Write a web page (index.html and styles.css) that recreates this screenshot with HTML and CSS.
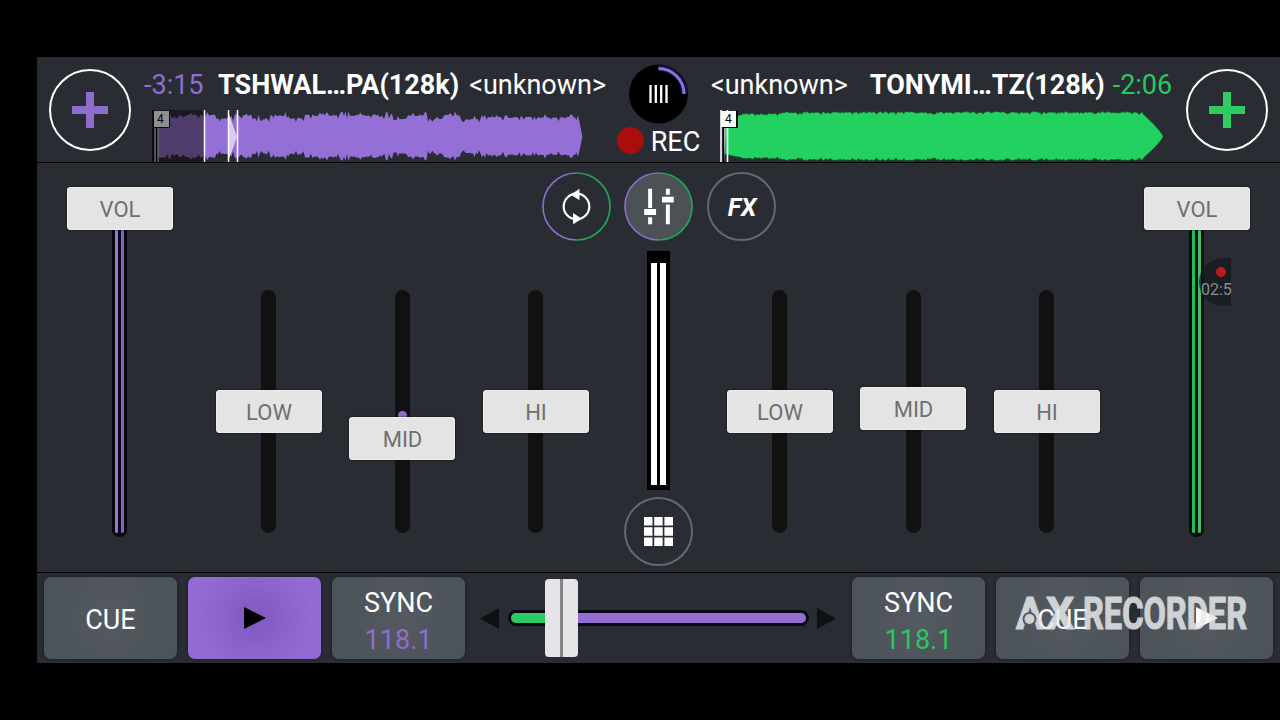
FILE: index.html
```html
<!DOCTYPE html>
<html lang="en">
<head>
  <meta charset="UTF-8">
  <meta name="viewport" content="width=device-width, initial-scale=1.0">
  <title>DJ Mixer</title>
  <link rel="stylesheet" href="styles.css">
</head>
<body>
  <div class="app">
    <header class="header">
      <button class="add purple" aria-label="Load track">
        <svg width="36" height="36" viewBox="0 0 36 36"><path d="M14 0h8v14h14v8H22v14h-8V22H0v-8h14z" fill="currentColor"/></svg>
      </button>

      <div class="deck">
        <div class="track-info">
          <span class="time purple">-3:15</span>
          <span class="title">TSHWAL…PA(128k)</span>
          <span class="artist">&lt;unknown&gt;</span>
        </div>
        <svg class="wave wave-left" width="432" height="52" viewBox="0 0 432 52">
          <rect width="52" height="52" fill="#1b1a20"/>
          <path id="waveLeft" fill="#946fd5"/>
          <rect x="6" width="46" height="52" fill="#1b1a20" opacity=".58"/>
          <path d="M1.500 0v52M4.500 17v35" stroke="#050507" stroke-width="2"/>
          <path d="M3 16v36" stroke="#929593"/>
          <path d="M6 18v34" stroke="#777a78"/>
          <path d="M77 4l8 23-8 22z" fill="#d9cbed"/>
          <path d="M52.500 0v52M76.500 0v52M85.500 0v52" stroke="#fff" stroke-width="1.500"/>
          <rect x="1" y="1" width="17" height="17" fill="#08090b"/>
          <rect x="2" y="1" width="15" height="16" fill="#8d908e"/>
          <text x="5" y="13" class="cue-no">4</text>
        </svg>
      </div>

      <div class="master">
        <svg width="60" height="60" viewBox="0 0 60 60">
          <circle cx="29.500" cy="30" r="29.500" fill="#000"/>
          <path d="M29.500 4a26 26 0 0 1 26 26" fill="none" stroke="#170a58" stroke-width="6"/>
          <path d="M29.500 4.500A25.500 25.500 0 0 1 55 30" fill="none" stroke="#8e76c8" stroke-width="3"/>
          <path d="M21.500 21v18M26.800 21v18M32.200 21v18M37.500 21v18" stroke="#fff" stroke-width="2.300"/>
        </svg>
        <div class="rec"><i class="rec-dot"></i>REC</div>
      </div>

      <div class="deck deck-right">
        <div class="track-info">
          <span class="artist">&lt;unknown&gt;</span>
          <span class="title">TONYMI…TZ(128k)</span>
          <span class="time green">-2:06</span>
        </div>
        <svg class="wave wave-right" width="445" height="52" viewBox="0 0 445 52">
          <path id="waveRight" fill="#23d160" stroke="#075f24" stroke-width=".7"/>
          <path d="M4 17h3l-2 35z" fill="#aab3ad"/>
          <path d="M2 0v52M8.500 0v52" stroke="#fff" stroke-width="1.600"/>
          <path d="M4.500 17v35" stroke="#050507"/>
          <rect x="3" y="1" width="16" height="17" fill="#08090b"/>
          <rect x="2" y="1" width="15" height="16" fill="#fff"/>
          <text x="6" y="13" class="cue-no">4</text>
        </svg>
      </div>

      <button class="add green" aria-label="Load track">
        <svg width="36" height="36" viewBox="0 0 36 36"><path d="M14 0h8v14h14v8H22v14h-8V22H0v-8h14z" fill="currentColor"/></svg>
      </button>
    </header>

    <main class="mixer">
      <div class="fader volume purple">
        <div class="handle">VOL</div>
        <div class="level"></div>
      </div>

      <div class="eq">
        <div class="fader"><div class="handle" style="margin-top: 100px">LOW</div></div>
        <div class="fader purple"><i class="mark"></i><div class="handle" style="margin-top: 126.5px">MID</div></div>
        <div class="fader"><div class="handle" style="margin-top: 100px">HI</div></div>
      </div>

      <div class="center">
        <div class="modes">
          <button class="round two-tone" aria-label="Loop">
            <svg width="69" height="69" viewBox="0 0 70 70">
              <path d="M35 1a34 34 0 0 0 0 68" fill="none" stroke="#8a6ec5" stroke-width="1.700"/>
              <path d="M35 1a34 34 0 0 1 0 68" fill="none" stroke="#21a952" stroke-width="1.700"/>
              <circle cx="35" cy="35" r="13" fill="none" stroke="#fff" stroke-width="2.200"/>
              <path d="M38 17v11.500l-9-5.500zM31.500 41.500v11.500l9-5.500z" fill="#fff"/>
            </svg>
          </button>
          <button class="round two-tone" aria-label="Mixer">
            <svg width="69" height="69" viewBox="0 0 70 70">
              <circle cx="35" cy="35" r="33.500" fill="#4c5156"/>
              <path d="M35 1a34 34 0 0 0 0 68" fill="none" stroke="#8a6ec5" stroke-width="1.700"/>
              <path d="M35 1a34 34 0 0 1 0 68" fill="none" stroke="#21a952" stroke-width="1.700"/>
              <path d="M24.500 17h4v19.500h-4zM24.500 46h4v7h-4zM20.500 37.500h12v6h-12zM42.500 17h4v6h-4zM38.500 25h12v6h-12zM42.500 33h4v20h-4z" fill="#fff"/>
            </svg>
          </button>
          <button class="round fx">FX</button>
        </div>
        <div class="meter"><i></i><i></i></div>
        <button class="round pads" aria-label="Pads">
          <svg width="29" height="29" viewBox="0 0 29 29"><path d="M0 0h8.500v8.500H0zM10.200 0h8.500v8.500h-8.500zM20.400 0H29v8.500h-8.600zM0 10.300h8.500v8.500H0zM10.200 10.300h8.500v8.500h-8.500zM20.400 10.300H29v8.500h-8.600zM0 20.600h8.500V29H0zM10.200 20.600h8.500V29h-8.500zM20.400 20.600H29V29h-8.600z" fill="#fff"/></svg>
        </button>
      </div>

      <div class="eq">
        <div class="fader"><div class="handle" style="margin-top: 100px">LOW</div></div>
        <div class="fader"><div class="handle" style="margin-top: 97px">MID</div></div>
        <div class="fader"><div class="handle" style="margin-top: 100px">HI</div></div>
      </div>

      <div class="fader volume green">
        <div class="handle">VOL</div>
        <div class="level"></div>
      </div>

      <div class="recorder-bubble"><i></i><span>02:5</span></div>
    </main>

    <footer class="footer">
      <button class="pad">CUE</button>
      <button class="pad playing" aria-label="Play">
        <svg width="22" height="22" viewBox="0 0 22 22"><path d="M0 0l22 11L0 22z" fill="#000"/></svg>
      </button>
      <button class="pad sync">SYNC<span class="purple">118.1</span></button>

      <div class="crossfader">
        <svg width="19" height="21" viewBox="0 0 19 21"><path d="M19 0v21L0 10.500z" fill="#0e1114"/></svg>
        <div class="cross-track">
          <div class="cross-left"></div>
          <div class="cross-handle"></div>
          <div class="cross-right"></div>
        </div>
        <svg width="19" height="21" viewBox="0 0 19 21"><path d="M0 0v21l19-10.500z" fill="#0e1114"/></svg>
      </div>

      <button class="pad sync">SYNC<span class="green">118.1</span></button>
      <button class="pad">CUE</button>
      <button class="pad" aria-label="Play">
        <svg width="22" height="22" viewBox="0 0 22 22"><path d="M0 0l22 11L0 22z" fill="#fff"/></svg>
      </button>

      <svg class="watermark" width="240" height="60" viewBox="-3 -10 240 60">
        <text x="1" y="35.500" textLength="28" lengthAdjust="spacingAndGlyphs">A</text>
        <circle cx="14.500" cy="26" r="6" fill="#e6e8ea" stroke="#565b62" stroke-width="2"/>
        <text x="31" y="35.500" textLength="28" lengthAdjust="spacingAndGlyphs">X</text>
        <text x="68" y="35.500" textLength="164" lengthAdjust="spacingAndGlyphs">RECORDER</text>
      </svg>
    </footer>
  </div>

  <script src="script.js"></script>
</body>
</html>
```
FILE: styles.css
```css
body {
  margin: 0;
  background-color: #000;
  font-family: Roboto, sans-serif;
  color: #fff;
  overflow: hidden;
}
button {
  font-family: inherit;
  color: inherit;
  background: none;
  border: none;
  padding: 0;
  display: flex;
  justify-content: center;
  align-items: center;
}
svg {
  display: block;
  flex-shrink: 0;
}
.purple {
  color: #8f6dd0;
}
.green {
  color: #27c95f;
}
.app {
  margin: 57px 0 0 37px;
  width: 1243px;
  height: 606px;
  background-color: #2a2c34;
}

/* header */
.header {
  display: flex;
  height: 105px;
  padding: 0 12px;
  border-bottom: 1px solid #000;
}
.add {
  width: 82px;
  height: 82px;
  margin-top: 12px;
  box-sizing: border-box;
  border: 2px solid #fff;
  border-radius: 50%;
}
.add.green {
  color: #2fcb62;
}
.deck {
  width: 464px;
  margin-left: 12px;
}
.deck-right {
  margin: 0 12px 0 0;
}
.track-info {
  display: flex;
  height: 53px;
  line-height: 56px;
  font-size: 27px;
  white-space: nowrap;
  padding-left: 1px;
}
.time {
  width: 74px;
}
.title {
  font-weight: bold;
  margin-right: 10px;
}
.deck-right .artist {
  margin-right: 22px;
}
.deck-right .time {
  width: auto;
}
.deck-right .title {
  margin-right: 8px;
}
.wave-left {
  margin-left: 9px;
}
.wave-right {
  margin-left: 9px;
}
.cue-no {
  font-size: 12px;
  fill: #000;
}
.master {
  width: 103px;
  padding-top: 7px;
  display: flex;
  flex-direction: column;
  align-items: center;
}
.rec {
  display: flex;
  align-items: center;
  gap: 7px;
  font-size: 27px;
  line-height: 36px;
}
.rec-dot {
  width: 27px;
  height: 27px;
  margin-top: -3px;
  border-radius: 50%;
  background-color: #a90d0c;
}

/* mixer */
.mixer {
  position: relative;
  display: flex;
  height: 409px;
  padding: 0 30px 0 29px;
  border-bottom: 1px solid #000;
}
.eq {
  display: flex;
  gap: 26.500px;
  margin: 127px 0 0 42px;
}
.center + .eq {
  margin: 127px 43px 0 0;
}
.fader {
  position: relative;
  width: 107px;
  display: flex;
  flex-direction: column;
  align-items: center;
}
.eq .fader {
  height: 231px;
  margin: 6px 0;
  background: linear-gradient(#111, #111) center / 15px 100% no-repeat;
}
.eq .fader::before,
.eq .fader::after {
  content: "";
  position: absolute;
  left: 46px;
  width: 15px;
  height: 8px;
  background-color: #111;
}
.eq .fader::before {
  top: -6px;
  border-radius: 8px 8px 0 0;
}
.eq .fader::after {
  bottom: -6px;
  border-radius: 0 0 8px 8px;
}
.handle {
  position: relative;
  z-index: 1;
  top: -6px;
  width: 106px;
  height: 43px;
  flex-shrink: 0;
  border-radius: 4px;
  background-color: #e4e4e4;
  box-shadow: 0 0 2px #08080a, inset 0 0 1px 1px #ededed;
  color: #707070;
  font-size: 22px;
  line-height: 46px;
  text-align: center;
  text-indent: 1px;
}
.mark {
  position: absolute;
  top: 115px;
  width: 9px;
  height: 9px;
  border-radius: 50%;
  background-color: currentColor;
}
.volume {
  height: 351px;
  margin-top: 24px;
}
.volume .handle {
  top: -0.5px;
}
.level {
  width: 9px;
  height: 303px;
  padding: 0 3px;
  background: linear-gradient(90deg, #937bc6 3px, #080019 3px 6px, #8265c3 6px) 3px 0 / 9px 303px no-repeat #080810;
  border-bottom: 4px solid #0b0a10;
  border-radius: 0 0 7px 7px;
}
.green .level {
  background: linear-gradient(90deg, #25bd58 3px, #001507 3px 6px, #45bd68 6px) 3px 0 / 9px 303px no-repeat #03130a;
}
.center {
  width: 135px;
  padding: 9px 0 0 2px;
  display: flex;
  flex-direction: column;
  align-items: center;
}
.modes {
  display: flex;
  gap: 13.500px;
}
.round {
  width: 69px;
  height: 69px;
  flex-shrink: 0;
  box-sizing: border-box;
  border-radius: 50%;
}
.fx,
.pads {
  border: 2px solid #666871;
}
.fx {
  padding: 2px 0 0 2px;
  font-size: 25px;
  font-weight: bold;
  font-style: italic;
}
.meter {
  display: flex;
  gap: 3px;
  width: 15px;
  height: 222px;
  margin: 10px 0 7px;
  padding: 12px 4px 5px;
  background-color: #000;
}
.meter i {
  width: 6px;
  background-color: #fff;
}
.recorder-bubble {
  position: absolute;
  z-index: 2;
  left: 1162px;
  top: 95px;
  width: 32px;
  height: 48px;
  border-radius: 24px 0 0 24px;
  background-color: rgba(22, 24, 28, 0.75);
  color: #8b8c90;
  font-size: 16px;
}
.recorder-bubble i {
  display: block;
  width: 10px;
  height: 10px;
  margin: 9px 0 0 17px;
  border-radius: 50%;
  background-color: #b91c1f;
}
.recorder-bubble span {
  display: block;
  margin-left: 2px;
  line-height: 26px;
}

/* footer */
.footer {
  position: relative;
  display: flex;
  gap: 11px;
  height: 82px;
  padding: 4px 7px;
}
.pad {
  width: 133px;
  height: 82px;
  flex-shrink: 0;
  border-radius: 7px;
  background: radial-gradient(circle, #555a61, #4c5359 70%);
  box-shadow: 0 0 3px #17191e;
  font-size: 27px;
  padding-top: 4px;
  box-sizing: border-box;
}
.pad svg {
  margin-top: -5px;
}
.playing {
  background: radial-gradient(circle, #845dc4 20%, #936bd5 75%);
}
.sync {
  flex-direction: column;
  line-height: 37px;
  padding-top: 8px;
}
.crossfader {
  flex: 1;
  display: flex;
  justify-content: space-between;
  align-items: center;
  padding: 0 5px 0 4px;
}
.cross-track {
  display: flex;
  align-items: center;
  width: 295px;
  height: 10px;
  border: 3px solid #0b0914;
  border-radius: 8px;
}
.cross-left {
  width: 34px;
  height: 10px;
  border-radius: 5px 0 0 5px;
  background-color: #29cc62;
}
.cross-handle {
  width: 33px;
  height: 78px;
  border-radius: 4px;
  background: linear-gradient(90deg, #e5e4e6 15px, #858585 15px 18px, #e5e4e6 18px);
}
.cross-right {
  flex: 1;
  height: 10px;
  border-radius: 0 5px 5px 0;
  background-color: #936fd2;
}
.watermark {
  position: absolute;
  left: 975px;
  top: 10px;
  opacity: 0.85;
}
.watermark text {
  font-size: 44px;
  font-weight: bold;
  fill: #e6e8ea;
  stroke: #e6e8ea;
  stroke-width: 1.2px;
}
```
FILE: script.js
```javascript
// same noise on every load
let seed = 7;
function random() {
  seed = (seed * 16807) % 2147483647;
  return seed / 2147483647;
}

function drawWave(id, start, end, height) {
  const top = [];
  const bottom = [];
  for (let x = start; x <= end; x += 1.5) {
    const h = height(x);
    top.push(x + ' ' + (27 - h).toFixed(1));
    bottom.unshift(x + ' ' + (26 + h * 0.97).toFixed(1));
  }
  document.getElementById(id).setAttribute('d', 'M' + top.join('L') + 'L' + bottom.join('L') + 'z');
}

drawWave('waveLeft', 6, 430.5, x => {
  if (x > 427) return (430.5 - x) * 5;
  let base = 21;
  if ((x > 65 && x < 82) || (x > 100 && x < 118) || (x > 135 && x < 152)) base = 17.5;
  if ((x > 240 && x < 256) || (x > 275 && x < 290) || (x > 308 && x < 330)) base = 17;
  if (x > 330) base = 19;
  return base + (random() > 0.75 ? random() * 5 : random() * 1.5) - (random() > 0.8 ? 3 : 0);
});

drawWave('waveRight', 6, 445, x => {
  if (x < 24) return 18 + (x - 6) * 0.25 + random();
  if (x > 424) return Math.max(0, 23 * Math.pow((444.5 - x) / 20.5, 0.8) || 0);
  const base = x < 60 ? 22.5 : 24;
  return base + random() * 1.5 - (random() > 0.85 ? 1.5 : 0);
});
```
